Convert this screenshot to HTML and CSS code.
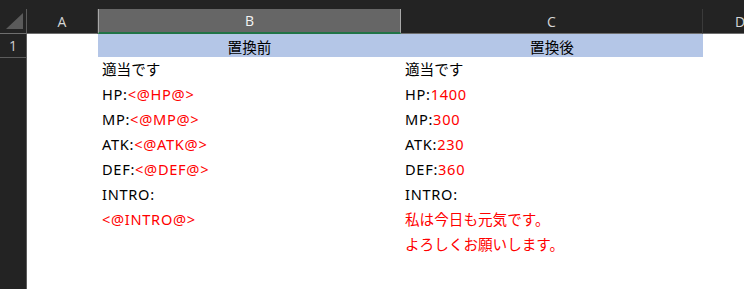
FILE: index.html
```html
<!DOCTYPE html>
<html lang="ja">
<head>
<meta charset="utf-8">
<title>Sheet</title>
<link rel="stylesheet" href="styles.css">
</head>
<body>
<div class="sheet">
  <div class="topstrip"></div>

  <div class="corner"><span class="tri"></span></div>
  <div class="colhead">A</div>
  <div class="colhead sel">B</div>
  <div class="colhead">C</div>
  <div class="colhead last">D</div>

  <div class="rowhead">1</div>
  <div class="cell"></div>
  <div class="cell fill">置換前</div>
  <div class="cell fill">置換後</div>
  <div class="cell"></div>

  <div class="rowhead empty"></div>
  <div class="cell"></div>
  <div class="cell body">
    <div class="j">適当です</div>
    <div>HP:<span class="red">&lt;@HP@&gt;</span></div>
    <div>MP:<span class="red">&lt;@MP@&gt;</span></div>
    <div>ATK:<span class="red">&lt;@ATK@&gt;</span></div>
    <div>DEF:<span class="red">&lt;@DEF@&gt;</span></div>
    <div>INTRO:</div>
    <div class="red">&lt;@INTRO@&gt;</div>
  </div>
  <div class="cell body">
    <div class="j">適当です</div>
    <div>HP:<span class="red">1400</span></div>
    <div>MP:<span class="red">300</span></div>
    <div>ATK:<span class="red">230</span></div>
    <div>DEF:<span class="red">360</span></div>
    <div>INTRO:</div>
    <div class="red j">私は今日も元気です。</div>
    <div class="red j">よろしくお願いします。</div>
  </div>
  <div class="cell"></div>
</div>
</body>
</html>
```

FILE: styles.css
```css
* { box-sizing: border-box; }
html, body { margin: 0; padding: 0; }
body {
  width: 744px;
  height: 289px;
  overflow: hidden;
  background: #ffffff;
  font-family: "Noto Sans CJK JP", "Noto Sans", sans-serif;
}
.sheet {
  display: grid;
  grid-template-columns: 27px 71px 303px 302px 1fr;
  grid-template-rows: 9px 25px 24px 1fr;
  height: 289px;
}
.topstrip {
  grid-column: 1 / -1;
  background: #232323;
}
.corner {
  background: #232323;
  border-right: 1px solid #5c5c5c;
  border-bottom: 1px solid #6e6e6e;
  position: relative;
}
.tri {
  position: absolute;
  left: 6px;
  top: 4px;
  width: 17px;
  height: 16px;
  background: #5a5a5a;
  clip-path: polygon(100% 0, 100% 100%, 0 100%);
}
.colhead {
  background: #232323;
  color: #d6d6d6;
  font-family: "Open Sans", "Noto Sans", sans-serif;
  font-size: 14px;
  display: flex;
  align-items: center;
  justify-content: center;
  border-bottom: 1px solid #6e6e6e;
  border-right: 1px solid #3a3a3a;
}
.colhead.sel {
  background: #666666;
  color: #f4f4f4;
  border-left: 1px solid #a8a8a8;
  border-right: 1px solid #a8a8a8;
  border-bottom: 2px solid #217346;
}
.colhead.last {
  justify-content: flex-start;
  padding-left: 32px;
  border-right: none;
}
.rowhead {
  background: #232323;
  color: #d0d0d0;
  font-family: "Open Sans", "Noto Sans", sans-serif;
  font-size: 14px;
  display: flex;
  align-items: center;
  justify-content: center;
  border-right: 1px solid #5c5c5c;
  border-bottom: 1px solid #5c5c5c;
}
.rowhead.empty { border-bottom: none; }
.cell {
  background: #ffffff;
}
.cell.fill {
  background: #b4c6e7;
  color: #000;
  font-size: 14.6px;
  display: flex;
  align-items: center;
  justify-content: center;
}
.body {
  font-family: "Noto Sans", "Noto Sans CJK JP", sans-serif;
  font-size: 14.6px;
  line-height: 25px;
  color: #000;
  padding-left: 4px;
  margin-top: -1px;
  white-space: nowrap;
  letter-spacing: 0.7px;
}
.body .j { letter-spacing: 0; }
.red { color: #ff0000; }
```
